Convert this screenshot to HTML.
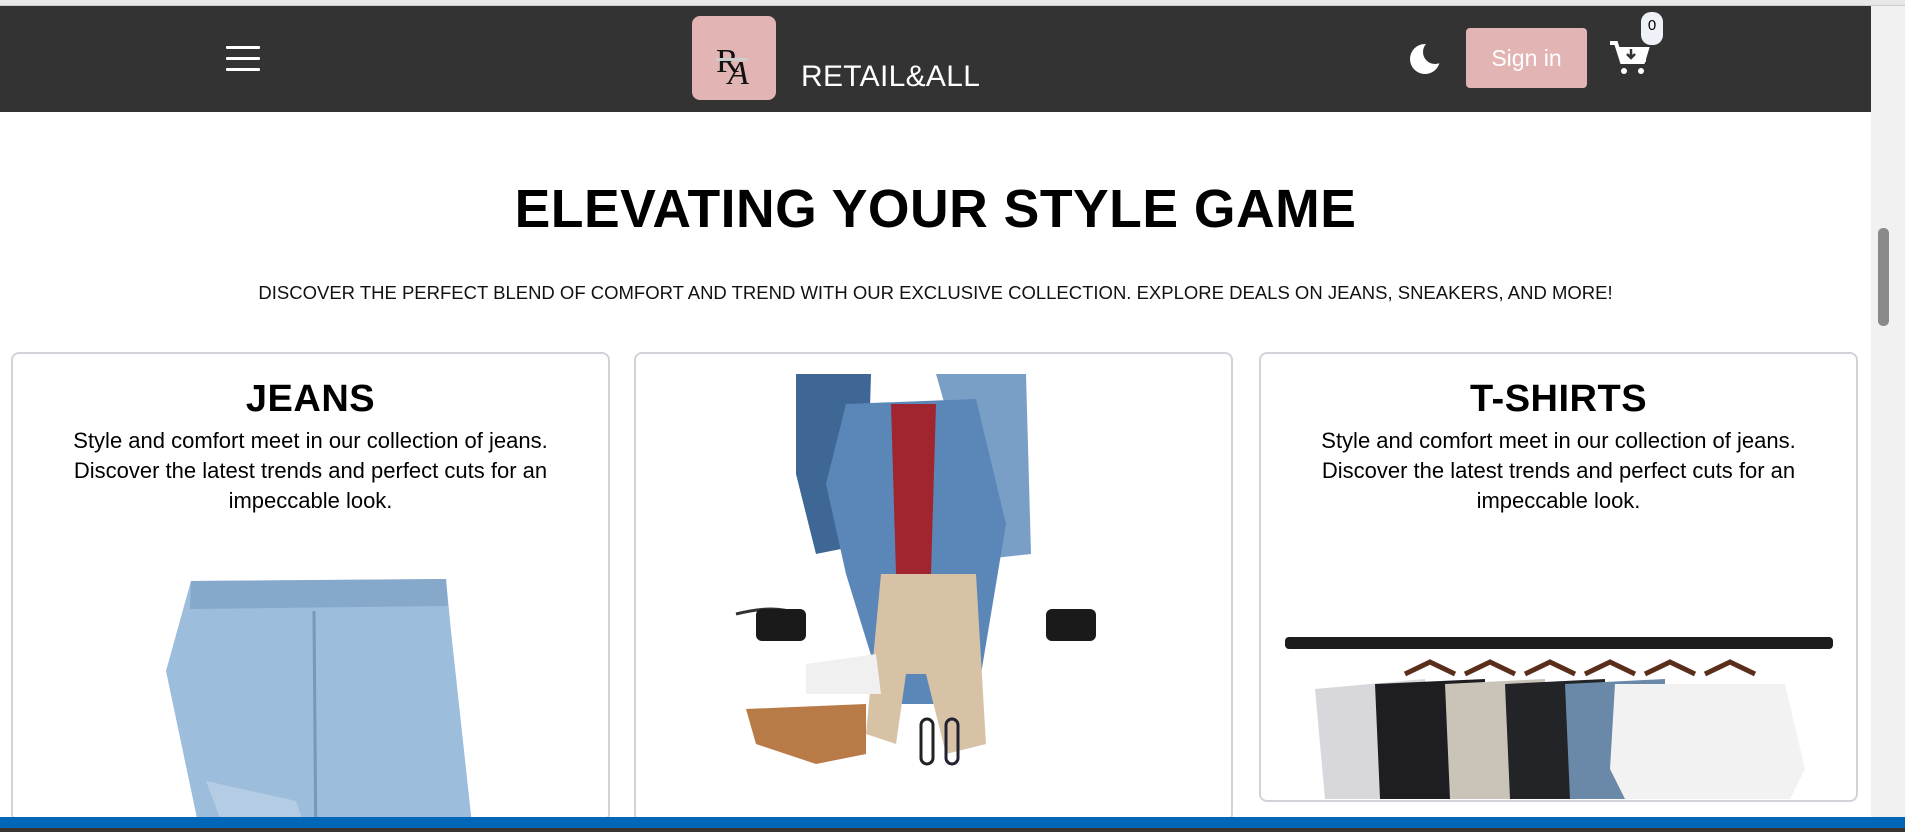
<!DOCTYPE html>
<html><head><meta charset="utf-8">
<style>
*{margin:0;padding:0;box-sizing:border-box}
html,body{width:1905px;height:832px;overflow:hidden;background:#fff;font-family:"Liberation Sans",sans-serif}
.top{position:absolute;left:0;top:0;width:1905px;height:6px;background:#e8e8e8;border-bottom:1px solid #ccc}
.hdr{position:absolute;left:0;top:6px;width:1871px;height:106px;background:#333}
.sb{position:absolute;left:1871px;top:6px;width:34px;height:811px;background:#f1f1f1}
.thumb{position:absolute;left:1878px;top:228px;width:11px;height:98px;background:#8a8a8a;border-radius:5px}
.ham{position:absolute;left:226px;width:34px;height:3px;background:#fff;border-radius:1px}
.logo{position:absolute;left:692px;top:16px;width:84px;height:84px;background:#e2b4b4;border-radius:8px}
.brand{position:absolute;left:801px;top:60px;color:#fff;font-size:30px;letter-spacing:0.3px}
.sign{position:absolute;left:1466px;top:28px;width:121px;height:60px;background:#e2b4b4;border-radius:4px;color:#fff;font-size:23px;line-height:60px;text-align:center}
.badge{position:absolute;left:1641px;top:12px;width:22px;height:33px;background:#eef2f8;border-radius:10px;font-size:15px;text-align:center;line-height:28px;color:#000}
h1{position:absolute;left:0;width:1871px;top:179px;text-align:center;font-size:53.5px;font-weight:bold;color:#000;letter-spacing:0.5px}
.sub{position:absolute;left:0;width:1871px;top:282px;text-align:center;font-size:18.5px;color:#111}
.card{position:absolute;top:352px;width:599px;height:470px;border:2px solid #d2d2da;border-radius:8px;background:#fff;overflow:hidden}
.card h2{text-align:center;font-size:38px;font-weight:bold;margin-top:25px;line-height:40px;letter-spacing:0.5px}
.card p{text-align:center;font-size:22px;line-height:30px;margin:7px 30px 0}
.blue{position:absolute;left:0;top:817px;width:1905px;height:11px;background:#0067b8}
.dark{position:absolute;left:0;top:828px;width:1905px;height:4px;background:#3a3430}
</style></head><body>
<div class="top"></div>
<div class="hdr"></div>
<div class="ham" style="top:46px"></div><div class="ham" style="top:57px"></div><div class="ham" style="top:68px"></div>
<div class="logo"><svg width="84" height="84" viewBox="0 0 84 84"><text x="24" y="56" font-family="Liberation Serif" font-size="34" fill="#111">R</text><text x="36" y="68" font-family="Liberation Serif" font-size="34" font-style="italic" fill="#111">A</text><rect x="24" y="42" width="32" height="3" fill="#ccc"/></svg></div>
<div class="brand">RETAIL&amp;ALL</div>
<svg style="position:absolute;left:1408px;top:40px" width="36" height="36" viewBox="0 0 36 36"><circle cx="17" cy="19" r="15" fill="#fff"/><circle cx="27" cy="12" r="12" fill="#333"/></svg>
<div class="sign">Sign in</div>
<svg style="position:absolute;left:1609px;top:40px" width="42" height="36" viewBox="0 0 42 36"><path d="M1 3 H7 L13 22 H34 L38 9 H9" fill="none" stroke="#fff" stroke-width="4"/><rect x="11" y="10" width="26" height="12" fill="#fff"/><path d="M22 9 v8 M18 14 l4 4 4-4" stroke="#333" stroke-width="2.5" fill="none"/><circle cx="15" cy="31" r="3" fill="#fff"/><circle cx="32" cy="31" r="3" fill="#fff"/></svg>
<div class="badge">0</div>
<h1>ELEVATING YOUR STYLE GAME</h1>
<div class="sub">DISCOVER THE PERFECT BLEND OF COMFORT AND TREND WITH OUR EXCLUSIVE COLLECTION. EXPLORE DEALS ON JEANS, SNEAKERS, AND MORE!</div>

<div class="card" style="left:11px">
<h2>JEANS</h2>
<p>Style and comfort meet in our collection of jeans. Discover the latest trends and perfect cuts for an impeccable look.</p>
<svg style="position:absolute;left:133px;top:217px" width="350" height="300" viewBox="0 0 350 300"><path d="M45 10 L300 8 L305 60 L330 290 L60 290 L20 100 Z" fill="#9cbddc"/><path d="M45 10 L300 8 L302 35 L44 38Z" fill="#86a9cb"/><path d="M168 40 L170 290" stroke="#7898ba" stroke-width="3"/><path d="M60 210 L150 230 L170 290 L90 290Z" fill="#b5cde4"/></svg>
</div>

<div class="card" style="left:634px">
<svg style="position:absolute;left:60px;top:20px" width="460" height="400" viewBox="0 0 460 400">
<path d="M100 0 L175 0 L170 170 L120 180 L100 100Z" fill="#3f6795"/>
<path d="M240 0 L330 0 L335 180 L290 185 L260 70Z" fill="#7a9fc7"/>
<path d="M150 30 L280 25 L310 150 L280 330 L190 330 L150 200 L130 110Z" fill="#5a86b8"/>
<path d="M195 30 L240 30 L235 200 L200 200Z" fill="#a0252e"/>
<path d="M185 200 L280 200 L290 370 L250 380 L230 300 L210 300 L200 370 L170 360Z" fill="#d8c2a6"/>
<path d="M40 240 q40 -10 60 0" stroke="#333" stroke-width="3" fill="none"/>
<rect x="60" y="235" width="50" height="32" rx="6" fill="#1a1a1a"/>
<rect x="350" y="235" width="50" height="32" rx="6" fill="#1a1a1a"/>
<path d="M110 290 L180 280 L185 320 L110 320Z" fill="#f0f0f0"/>
<path d="M50 335 L170 330 L170 380 L120 390 L60 370Z" fill="#b87a46"/>
<rect x="225" y="345" width="12" height="45" rx="6" fill="none" stroke="#222" stroke-width="3"/>
<rect x="250" y="345" width="12" height="45" rx="6" fill="none" stroke="#223" stroke-width="3"/>
</svg>
</div>

<div class="card" style="left:1259px;height:450px">
<h2>T-SHIRTS</h2>
<p>Style and comfort meet in our collection of jeans. Discover the latest trends and perfect cuts for an impeccable look.</p>
<svg style="position:absolute;left:24px;top:275px" width="550" height="175" viewBox="0 0 550 175">
<rect x="0" y="8" width="548" height="12" rx="4" fill="#1c1c1c"/>
<g fill="none" stroke="#5a2e1a" stroke-width="5"><path d="M120 45 l25 -12 25 12"/><path d="M180 45 l25 -12 25 12"/><path d="M240 45 l25 -12 25 12"/><path d="M300 45 l25 -12 25 12"/><path d="M360 45 l25 -12 25 12"/><path d="M420 45 l25 -12 25 12"/></g>
<path d="M30 60 L140 50 L150 170 L40 170Z" fill="#d8d8dc"/>
<path d="M90 55 L200 50 L200 170 L95 170Z" fill="#1e1e22"/>
<path d="M160 55 L260 50 L260 170 L165 170Z" fill="#c9c3b8"/>
<path d="M220 55 L320 50 L320 170 L225 170Z" fill="#222428"/>
<path d="M280 55 L380 50 L380 170 L285 170Z" fill="#6a89a8"/>
<path d="M330 55 L500 55 L520 140 L505 170 L340 170 L325 140Z" fill="#f2f2f2"/>
</svg>
</div>

<div class="sb"></div><div class="thumb"></div>
<div class="blue"></div><div class="dark"></div>
</body></html>
